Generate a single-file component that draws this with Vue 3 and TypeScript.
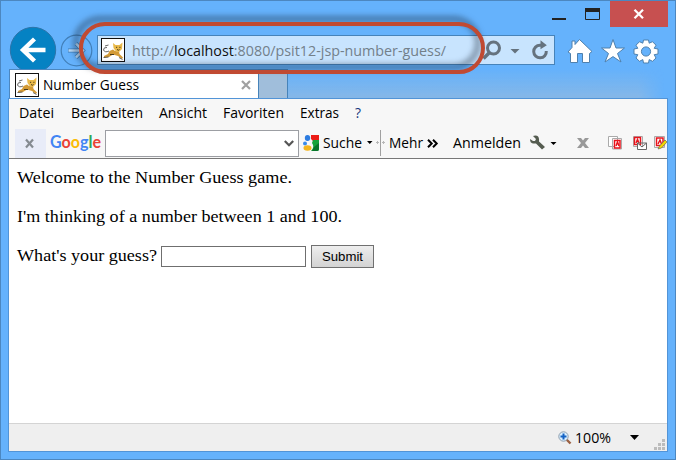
<script setup lang="ts">
import { h, ref } from 'vue'

interface LabelProps { text: string; w: number; size?: number }

// A single line of text fitted to a fixed advance width, baseline at 15px.
const Label = (p: LabelProps) =>
  h('svg', { width: p.w, height: 20, style: { overflow: 'visible', flex: 'none', display: 'block' } }, [
    h('text', { x: 0, y: 15, 'font-size': p.size ?? 14.7, textLength: p.w, lengthAdjust: 'spacingAndGlyphs' }, p.text),
  ])
Label.props = ['text', 'w', 'size']

const menu = [
  { text: 'Datei', w: 35 },
  { text: 'Bearbeiten', w: 72 },
  { text: 'Ansicht', w: 48 },
  { text: 'Favoriten', w: 61 },
  { text: 'Extras', w: 39 },
  { text: '?', w: 6 },
]
const search = ref('')
const guess = ref('')
</script>

<template>
  <div class="window">
    <svg width="0" height="0" class="defs">
      <defs>
        <symbol id="cat" viewBox="0 0 24 24">
          <rect x=".5" y=".5" width="23" height="23" fill="#fff" stroke="#111" />
          <path d="M3 18L7 16L8.500 13L12 11.500L14 13L18 13.500L18.500 16L22 19.500L21 21L17 18L12 16.500L8 19L3 20Z" fill="#d39a35" />
          <path d="M12 5L14.500 7L18.500 7L21.500 4.500L21 11L18 14L15 13.500L12.500 10Z" fill="#e9b94a" />
          <path d="M2.500 19.500L7.500 19M18 19.500L21.500 21.500M8 13Q4 15 2.500 12Q2.500 9 6 9.500M4 8L7.500 7" fill="none" stroke="#555" stroke-width=".9" />
          <path d="M15 9.300H16.200M18.300 9.300H19.500M16 11.500L17.500 12.200L18.500 11.500M9 16.500L13 16.500" fill="none" stroke="#4a3c1c" stroke-width="1" />
        </symbol>
      </defs>
    </svg>

    <header class="chrome">
      <div class="caption">
        <svg width="48" height="27" class="capicons" viewBox="0 0 48 27">
          <path d="M0 18H14V20H0Z" fill="#222" />
          <path d="M33.500 9.500H47.500V19.500H33.500Z" fill="none" stroke="#222" />
          <path d="M33 8H48V12H33Z" fill="#222" />
        </svg>
        <div class="close">
          <svg width="12" height="10" viewBox="0 0 12 10"><path d="M1.500 .8L10 9.200M10 .8L1.500 9.200" stroke="#fff" stroke-width="2.300" /></svg>
        </div>
      </div>

      <div class="nav">
        <svg class="back" width="48" height="48" viewBox="0 0 48 48">
          <circle cx="24" cy="24" r="22.700" fill="#0582c3" stroke="#2c74aa" />
          <path d="M36.500 24H15M25.500 13L14 24L25.500 35" fill="none" stroke="#fff" stroke-width="4.400" />
        </svg>
        <svg class="forward" width="33" height="33" viewBox="0 0 33 33">
          <circle cx="16.500" cy="16.500" r="15.300" fill="none" stroke="#417fb8" stroke-width="1.200" />
          <path d="M8 16.500H22M16 9.500L23 16.500L16 23.500" fill="none" stroke="#417fb8" stroke-width="4" />
          <path d="M8.500 16.500H22M16 9.700L22.800 16.500L16 23.300" fill="none" stroke="#b9dcfb" stroke-width="2.500" />
        </svg>
        <div class="address">
          <svg width="24" height="24" class="fav"><use href="#cat" /></svg>
          <svg width="314" height="20" class="url">
            <text x="0" y="15" font-size="14.700" textLength="314" lengthAdjust="spacingAndGlyphs" fill="#73808a">http://<tspan fill="#111">localhost</tspan>:8080/psit12-jsp-number-guess/</text>
          </svg>
          <svg class="tools" width="70" height="26" viewBox="0 0 70 26">
            <g fill="none" stroke="#65727e">
              <circle cx="11.500" cy="11" r="6" stroke-width="3" />
              <path d="M7.500 15.500L1.500 21.500" stroke-width="3.600" />
              <path d="M59 8.200H58A6.300 6.300 0 1 0 64.300 14" stroke-width="3" />
            </g>
            <path d="M28.500 12H37.500L33 16.500Z" fill="#65727e" />
            <path d="M58.500 3.300L64.800 8.300L58.500 12.300Z" fill="#65727e" />
          </svg>
        </div>
        <svg class="actions" width="92" height="26" viewBox="0 0 92 26">
          <g fill="#fff" stroke="#4e80ad" stroke-width="1">
            <path d="M1 14L5 9.500V3H8V6.500L12.500 1.500L25 13.500L22.500 15.500V24.500H15.500V15.500H10.500V24.500H3.500V15.500Z" />
            <path d="M46 1.500L49 10H57.500L50.500 15.500L54 24L46 18.600L38 24L41.500 15.500L34.500 10H43Z" />
            <path d="M76.500 2H81.500L82.200 5.200L85.500 3.700L89 7.200L87.200 10.300L91 11V16L87.200 16.700L89 20L85.500 23.300L82.200 21.600L81.500 25H76.500L75.800 21.600L72.500 23.300L69 20L70.800 16.700L67 16V11L70.800 10.300L69 7.200L72.500 3.700L75.800 5.200Z" />
            <circle cx="79" cy="13.500" r="4.600" fill="#65b2fc" />
          </g>
        </svg>
      </div>

      <div class="tabs">
        <div class="tab">
          <svg width="24" height="24"><use href="#cat" /></svg>
          <Label class="tabtitle" text="Number Guess" :w="96" />
          <svg class="tabclose" width="10" height="10" viewBox="0 0 10 10"><path d="M1 1L9 9M9 1L1 9" stroke="#a0a0a0" stroke-width="2.200" /></svg>
        </div>
        <div class="newtab"></div>
        <div class="glow"></div>
      </div>
      <div class="highlight"></div>
    </header>

    <section class="client">
      <nav class="menu">
        <Label v-for="m in menu" :key="m.text" :text="m.text" :w="m.w" :class="{ help: m.text === '?' }" />
      </nav>

      <div class="toolbar">
        <div class="tbclose"><svg width="9" height="9" viewBox="0 0 9 9"><path d="M1 .5L8 8.500M8 .5L1 8.500" stroke="#858b91" stroke-width="2.200" /></svg></div>
        <svg class="google" width="51" height="22">
          <text x="0" y="15.500" font-size="16.500" textLength="51" lengthAdjust="spacingAndGlyphs"><tspan fill="#4285f4">G</tspan><tspan fill="#ea4335">o</tspan><tspan fill="#fbbc05">o</tspan><tspan fill="#4285f4">g</tspan><tspan fill="#34a853">l</tspan><tspan fill="#ea4335">e</tspan></text>
        </svg>
        <div class="combo">
          <input v-model="search" />
          <svg width="10" height="7" viewBox="0 0 10 7"><path d="M.8 1L5 5.200L9.200 1" fill="none" stroke="#555" stroke-width="2.200" /></svg>
        </div>
        <svg class="gicon" width="16" height="16" viewBox="0 0 16 16">
          <path d="M8 0H16V6H10L8 4Z" fill="#ec1c16" />
          <path d="M10 5H16V14Q16 16 14 16H8Q12 12 9 8Z" fill="#16a33a" />
          <path d="M11 12L16 8V14Q16 16 14 16H9Z" fill="#08752a" />
          <ellipse cx="4.500" cy="3" rx="2.700" ry="3" fill="#2c7ce0" />
          <ellipse cx="2" cy="8.500" rx="2" ry="2" fill="#3a8ae8" />
          <ellipse cx="4.500" cy="13" rx="4" ry="2.800" fill="#f5b51b" />
        </svg>
        <Label class="suche" text="Suche" :w="39" />
        <svg class="sep" width="24" height="30" viewBox="0 0 24 30">
          <path d="M5 13H10.500L7.750 16Z" fill="#000" />
          <path d="M18.500 2V28" stroke="#a0a0a0" />
          <path d="M15.500 13V16M14 14.500H17M21.500 13V16M20 14.500H23" stroke="#b8b8b8" />
        </svg>
        <Label class="mehr" text="Mehr" :w="34" />
        <svg class="more" width="11" height="9" viewBox="0 0 11 9"><path d="M1 .8L4.700 4.500L1 8.200M6 .8L9.700 4.500L6 8.200" fill="none" stroke="#000" stroke-width="2" /></svg>
        <Label class="login" text="Anmelden" :w="68" />
        <svg class="wrench" width="28" height="16" viewBox="0 0 28 16">
          <path d="M3 1L6 4L5 6L3 6L0 4Q0 8 3 8.500L6 8.500L12 14.500L15 12L9 6.500Q9.500 2 7 .8Q5 0 3 1Z" fill="#555c50" />
          <path d="M20.500 7H26.500L23.500 10Z" fill="#000" />
        </svg>
        <svg class="stop" width="12" height="10" viewBox="0 0 12 10"><path d="M0 0H4L6 2.500L8 0H12L8 5L12 10H8L6 7.500L4 10H0L4 5Z" fill="#999" /></svg>
        <svg class="extras" width="59" height="16" viewBox="0 0 59 16">
          <g fill="#fff" stroke="#aaa">
            <path d="M.5 1.500H9.500V11.500H.5ZM4.500 3.500H13.500V14H4.500Z" />
            <path d="M25.500 1.500H34.500V11.500H25.500Z" />
            <path d="M46.500 1.500H56.500V12.500H46.500Z" />
          </g>
          <g fill="#fff" stroke="#e8131b" stroke-width="1.500">
            <path d="M6.500 5.500H12V13H6.500ZM26.500 2.500H32.500V9.500H26.500ZM48.500 3H55V10.500H48.500Z" />
            <path d="M8 11L9.500 7L11 11M28 8L29.500 4.500L31 8M50 9L52 5L53.500 9" fill="none" />
          </g>
          <path d="M29.500 8H38.500V14.500H29.500ZM29.500 8L34 12L38.500 8" fill="#fff" stroke="#666" />
          <path d="M50 14L51.500 11L57 5L59 7L53.500 13Z" fill="#f5d800" stroke="#555" stroke-width=".6" />
        </svg>
      </div>

      <main class="page">
        <Label text="Welcome to the Number Guess game." :w="275" :size="17.3" />
        <Label text="I'm thinking of a number between 1 and 100." :w="325" :size="17.3" />
        <div class="ask">
          <Label text="What's your guess?" :w="140" :size="17.3" />
          <input v-model="guess" class="guess" />
          <button class="submit"><Label text="Submit" :w="41" :size="13.3" /></button>
        </div>
      </main>

      <footer class="status">
        <svg class="zoomicon" width="14" height="14" viewBox="0 0 14 14">
          <path d="M8.500 8.500L12.500 12.500" stroke="#9b6042" stroke-width="2.400" />
          <circle cx="5.500" cy="5.500" r="4.700" fill="#d9efff" stroke="#8d9dae" />
          <path d="M5.500 2.500V8.500M2.500 5.500H8.500" stroke="#1462c4" stroke-width="2" />
        </svg>
        <Label text="100%" :w="36" />
        <svg class="drop" width="9" height="5" viewBox="0 0 9 5"><path d="M0 0H9L4.500 5Z" fill="#000" /></svg>
        <svg class="grip" width="11" height="11" viewBox="0 0 11 11"><path d="M8 0H11V3H8ZM4 4H7V7H4ZM8 4H11V7H8ZM0 8H3V11H0ZM4 8H7V11H4ZM8 8H11V11H8Z" fill="#bcbcbc" /></svg>
      </footer>
    </section>
  </div>
</template>

<style>
body { margin: 0; overflow: hidden; }
</style>

<style scoped>
svg { display: block; flex: none; overflow: visible; }
.defs { position: absolute; }
.window {
  box-sizing: border-box;
  width: 676px;
  height: 460px;
  border: 1px solid #4c87c0;
  background: #65b2fc;
  padding: 0 7px 7px 7px;
  display: flex;
  flex-direction: column;
  font-family: "Open Sans", "Noto Sans", sans-serif;
}
.chrome { position: relative; height: 97px; flex: none; display: flex; flex-direction: column; }
.caption { height: 26px; display: flex; justify-content: flex-end; }
.capicons { margin: -1px 10px 0 0; }
.close { width: 58px; height: 26px; background: #c75050; display: flex; align-items: center; justify-content: center; }
.nav { height: 42px; display: flex; align-items: flex-start; }
.back { margin: -1px 0 0 1px; }
.forward { margin: 7px 0 0 3px; }
.address {
  box-sizing: border-box; width: 458px; height: 30px; margin: 8px 0 0 4px;
  border: 1px solid #4683ba; background: #c8e4fe; display: flex; align-items: center;
}
.fav { margin-left: 3px; }
.url { margin: 2px 0 0 7px; }
.tools { margin: -1px 0 0 36px; }
.actions { margin: 11px 0 0 12px; }
.tabs { height: 29px; padding-left: 1px; display: flex; }
.tab {
  position: relative; box-sizing: border-box; width: 249px; height: 29px;
  background: #fff; border-left: 1px solid #4c87c0; border-top: 1px solid #4c87c0;
  display: flex; align-items: flex-start; padding: 3px 0 0 5px;
}
.tabtitle { margin: 2px 0 0 4px; }
.tabclose { margin: 7px 0 0 102px; }
.newtab { box-sizing: border-box; width: 30px; border: 1px solid #4683ba; border-bottom: 0; background: #a0bedb; }
.glow {
  flex: 1;
  background: linear-gradient(rgba(134, 183, 231, 0), #86b7e7);
  mask-image: linear-gradient(to right, #000 calc(100% - 30px), transparent calc(100% - 4px));
}
.highlight {
  position: absolute; left: 71px; top: 21px; box-sizing: border-box; width: 406px; height: 52px;
  border: 4px solid #c04a32; border-radius: 26px;
  filter: drop-shadow(-5px -5px 3px rgba(20, 30, 45, .6));
}
.client { flex: 1; min-height: 0; border: 1px solid #5294d7; display: flex; flex-direction: column; background: #fff; }
.menu { height: 29px; background: #f7f7f7; display: flex; gap: 16px; padding: 4px 0 0 10px; box-sizing: border-box; flex: none; }
.menu > svg:first-child { margin-right: 1px; }
.help { fill: #16367c; }
.toolbar { height: 31px; box-sizing: border-box; border-bottom: 1px solid #777; background: #f7f7f7; display: flex; align-items: center; flex: none; overflow: hidden; }
.tbclose { width: 32px; height: 29px; margin-left: 6px; background: #e8ecf8; display: flex; align-items: center; justify-content: center; }
.tbclose svg { margin-right: 3px; }
.google { margin-left: 4px; font-family: Lato, sans-serif; font-weight: 700; }
.combo { box-sizing: border-box; width: 194px; height: 27px; margin-left: 3px; border: 1px solid #9c9ea3; background: #fff; display: flex; align-items: center; padding-right: 4px; margin-left: 4px; }
.combo input { flex: 1; min-width: 0; border: 0; outline: 0; padding: 0 4px; background: none; }
.gicon { margin-left: 4px; }
.suche { margin-left: 4px; }
.mehr { margin-left: 3px; }
.more { margin-left: 4px; }
.login { margin-left: 15px; }
.wrench { margin-left: 9px; }
.stop { margin-left: 19px; }
.extras { margin-left: 19px; }
.page { flex: 1; padding: 9px 0 0 8px; display: flex; flex-direction: column; gap: 19px; font-family: "Liberation Serif", serif; }
.ask { display: flex; align-items: flex-start; }
.guess { box-sizing: border-box; width: 145px; height: 21px; margin-left: 4px; border: 1px solid #6f6f6f; background: #fff; padding: 1px; outline: 0; }
.submit { box-sizing: border-box; width: 63px; height: 23px; margin: -1px 0 0 5px; padding: 0 0 2px 10px; border: 1px solid #707070; background: linear-gradient(#eee, #d3d3d3); font-family: "Liberation Sans", sans-serif; }
.status { height: 28px; box-sizing: border-box; border-top: 1px solid #d4d4d4; background: #efefef; display: flex; align-items: center; padding-left: 549px; flex: none; }
.zoomicon { margin-right: 3px; }
.drop { margin-left: 19px; }
.grip { margin: 13px 0 0 15px; }
</style>
